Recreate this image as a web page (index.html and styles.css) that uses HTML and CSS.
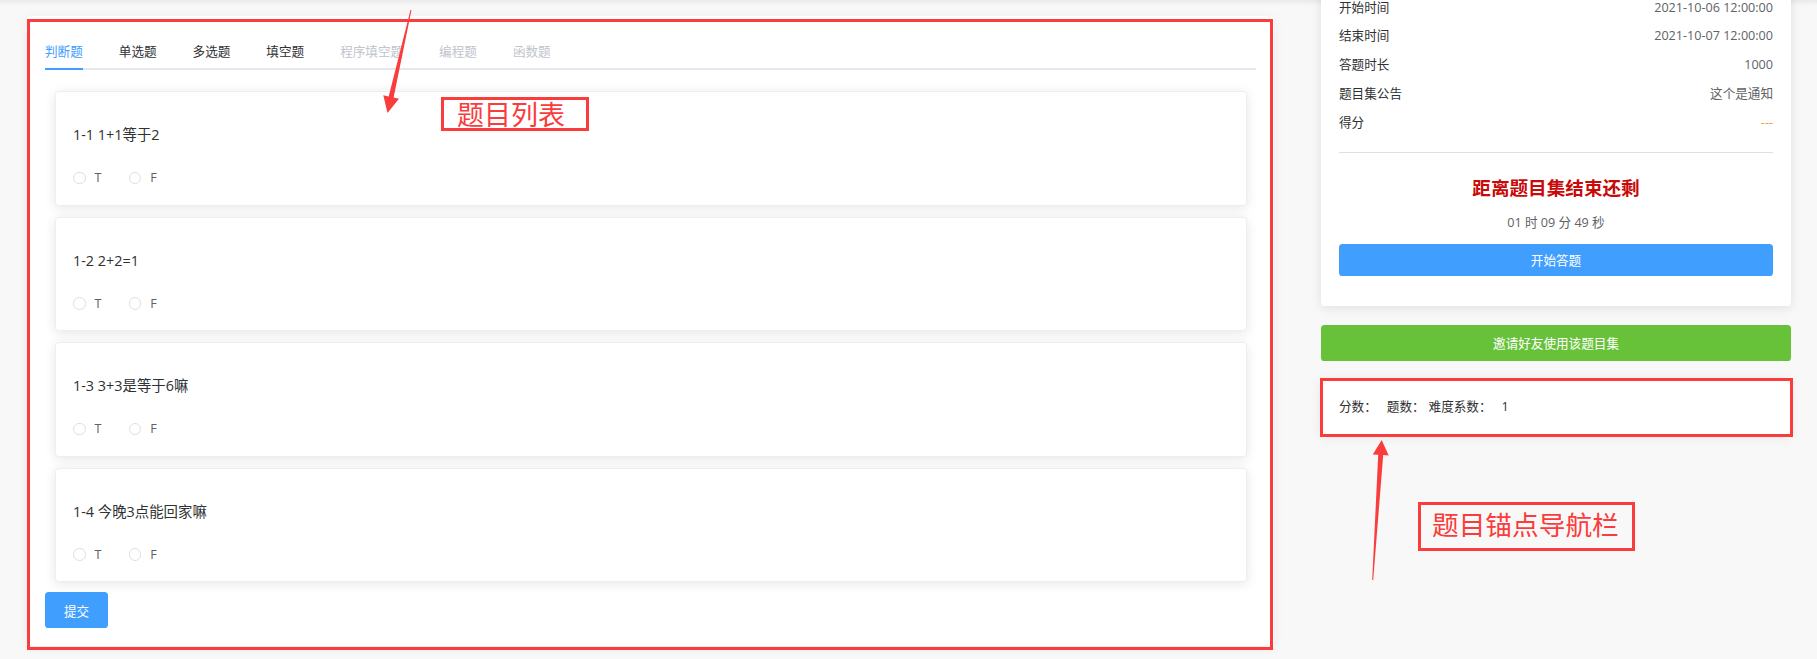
FILE: index.html
```html
<!DOCTYPE html>
<html lang="zh-CN">
<head>
<meta charset="utf-8">
<title>题目集</title>
<link rel="stylesheet" href="styles.css">
</head>
<body>
<div class="page">
  <main class="layout">
    <section class="paper">
      <nav class="tabs">
        <span class="tab active">判断题</span>
        <span class="tab">单选题</span>
        <span class="tab">多选题</span>
        <span class="tab">填空题</span>
        <span class="tab disabled">程序填空题</span>
        <span class="tab disabled">编程题</span>
        <span class="tab disabled">函数题</span>
      </nav>
      <div class="questions">
        <article class="q-card">
          <p class="q-title">1-1 1+1等于2</p>
          <div class="radios">
            <label class="radio"><span class="radio-dot"></span>T</label>
            <label class="radio"><span class="radio-dot"></span>F</label>
          </div>
        </article>
        <article class="q-card">
          <p class="q-title">1-2 2+2=1</p>
          <div class="radios">
            <label class="radio"><span class="radio-dot"></span>T</label>
            <label class="radio"><span class="radio-dot"></span>F</label>
          </div>
        </article>
        <article class="q-card">
          <p class="q-title">1-3 3+3是等于6嘛</p>
          <div class="radios">
            <label class="radio"><span class="radio-dot"></span>T</label>
            <label class="radio"><span class="radio-dot"></span>F</label>
          </div>
        </article>
        <article class="q-card">
          <p class="q-title">1-4 今晚3点能回家嘛</p>
          <div class="radios">
            <label class="radio"><span class="radio-dot"></span>T</label>
            <label class="radio"><span class="radio-dot"></span>F</label>
          </div>
        </article>
      </div>
      <button class="btn btn-submit">提交</button>
    </section>

    <aside class="side">
      <div class="info-card">
        <dl class="info-rows">
          <div class="info-row"><dt>开始时间</dt><dd>2021-10-06 12:00:00</dd></div>
          <div class="info-row"><dt>结束时间</dt><dd>2021-10-07 12:00:00</dd></div>
          <div class="info-row"><dt>答题时长</dt><dd>1000</dd></div>
          <div class="info-row"><dt>题目集公告</dt><dd>这个是通知</dd></div>
          <div class="info-row"><dt>得分</dt><dd class="score">---</dd></div>
        </dl>
        <div class="divider"></div>
        <h3 class="countdown-title">距离题目集结束还剩</h3>
        <p class="countdown">01 时 09 分 49 秒</p>
        <button class="btn btn-start">开始答题</button>
      </div>
      <button class="btn btn-invite">邀请好友使用该题目集</button>
      <div class="anchor-card">
        <span class="anchor-item first">分数：</span><span class="anchor-item">题数：</span><span class="anchor-item">难度系数：</span><span class="anchor-value">1</span>
      </div>
    </aside>
  </main>

  <div class="mark mark-list"></div>
  <div class="mark mark-nav"></div>
  <div class="tag tag-list">题目列表</div>
  <div class="tag tag-nav">题目锚点导航栏</div>
  <svg class="arrows" width="1817" height="659" viewBox="0 0 1817 659">
    <polygon points="410.5,9.9 388.7,96.4 383.3,95.2 387.5,113 399,98.8 393.6,97.6 411.5,10.1"/>
    <polygon points="1372.2,580 1378.2,454.8 1372.8,454.5 1381.7,440 1388.7,455.5 1383.2,455.1 1373.2,580"/>
  </svg>
</div>
</body>
</html>
```

FILE: styles.css
```css
* {
  box-sizing: border-box;
  margin: 0;
  padding: 0;
}

body {
  font-family: "Open Sans", "Noto Sans CJK SC", sans-serif;
  font-size: 12.6px;
  color: #303133;
  background: #f8f8f8 linear-gradient(#e9e9e9, #f8f8f8 6px) no-repeat;
  overflow: hidden;
}

.page {
  position: relative;
  width: 1817px;
  height: 659px;
  overflow: hidden;
}

.layout {
  display: flex;
  align-items: flex-start;
  gap: 47px;
  padding: 16px 26px 0 27px;
}

/* ---------- left: question paper ---------- */
.paper {
  flex: 0 0 1247px;
  background: #fff;
  padding: 18px;
  border-radius: 3.6px;
  box-shadow: 0 2px 12px rgba(0, 0, 0, 0.06);
}

.tabs {
  display: flex;
  height: 36px;
  box-shadow: inset 0 -2px 0 #e4e7ed;
}

.tab {
  position: relative;
  padding: 0 18px;
  height: 36px;
  line-height: 36px;
  color: #303133;
  white-space: nowrap;
}

.tab:first-child {
  padding-left: 0;
}

.tab.active {
  color: #409eff;
}

.tab.active::after {
  content: "";
  position: absolute;
  left: 0;
  right: 18px;
  bottom: 0;
  height: 2px;
  background: #409eff;
}

.tab.disabled {
  color: #c0c4cc;
}

.questions {
  display: flex;
  flex-direction: column;
  gap: 11px;
  padding: 21px 9px 0 10px;
}

.q-card {
  height: 114.5px;
  padding: 17px 17px 16.5px;
  border: 1px solid #ebeef5;
  border-radius: 3.6px;
  background: #fff;
  box-shadow: 0 2px 12px rgba(0, 0, 0, 0.1);
}

.q-title {
  margin-top: 16px;
  font-size: 14.4px;
  line-height: 20px;
  color: #303133;
}

.radios {
  display: flex;
  align-items: center;
  height: 20px;
  margin-top: 23px;
}

.radio {
  display: flex;
  align-items: center;
  margin-right: 27px;
  line-height: 20px;
  color: #606266;
}

.radio-dot {
  width: 12.6px;
  height: 12.6px;
  margin-right: 9px;
  border: 1px solid #dcdfe6;
  border-radius: 50%;
  background: #fff;
}

.btn {
  display: block;
  border: none;
  border-radius: 3.6px;
  font: inherit;
  color: #fff;
  text-align: center;
}

.btn-submit {
  width: 63px;
  height: 36px;
  margin-top: 10px;
  background: #409eff;
}

/* ---------- right: side panel ---------- */
.side {
  flex: 0 0 470px;
  margin-top: -40.4px;
  display: flex;
  flex-direction: column;
}

.info-card {
  background: #fff;
  padding: 18px 18px 29.7px;
  border-radius: 3.6px;
  box-shadow: 0 2px 12px rgba(0, 0, 0, 0.1);
}

.info-row {
  display: flex;
  justify-content: space-between;
  line-height: 28.8px;
}

.info-row dt {
  color: #303133;
}

.info-row dd {
  color: #606266;
}

.info-row dd.score {
  color: #e6a23c;
}

.divider {
  height: 1px;
  margin-top: 14.4px;
  background: #dcdfe6;
}

.countdown-title {
  margin-top: 20px;
  font-family: "Noto Sans CJK SC", sans-serif;
  font-size: 18.6px;
  font-weight: 700;
  line-height: 28px;
  text-align: center;
  color: #c80a0a;
}

.countdown {
  margin-top: 11.7px;
  line-height: 20px;
  text-align: center;
  color: #606266;
}

.btn-start {
  width: 100%;
  height: 32px;
  margin-top: 11.3px;
  background: #409eff;
}

.btn-invite {
  width: 100%;
  height: 36px;
  margin-top: 19.3px;
  background: #67c23a;
}

.anchor-card {
  margin-top: 18px;
  padding: 18px;
  line-height: 20px;
  background: #fff;
  color: #303133;
  box-shadow: 0 2px 12px rgba(0, 0, 0, 0.08);
}

.anchor-item {
  margin-right: 4px;
}

.anchor-item.first {
  margin-right: 10px;
}

.anchor-value {
  margin-left: 6px;
}

/* ---------- annotations drawn over the screenshot ---------- */
.mark {
  position: absolute;
  border: 3px solid #fa3c3c;
}

.mark-list {
  left: 27px;
  top: 19px;
  width: 1246px;
  height: 631px;
}

.mark-nav {
  left: 1320px;
  top: 378px;
  width: 473px;
  height: 59px;
}

.tag {
  position: absolute;
  border: 3px solid #fa3c3c;
  color: #fa3c3c;
  font-family: "Noto Sans CJK SC", sans-serif;
  font-weight: 400;
  white-space: nowrap;
}

.tag-list {
  left: 441px;
  top: 97px;
  width: 148px;
  height: 34px;
  padding-left: 13px;
  font-size: 27px;
  line-height: 28px;
}

.tag-nav {
  left: 1418px;
  top: 502px;
  width: 217px;
  height: 49px;
  padding-left: 11px;
  font-size: 26.7px;
  line-height: 38px;
}

.arrows {
  position: absolute;
  left: 0;
  top: 0;
  pointer-events: none;
}

.arrows polygon {
  fill: #fa3c3c;
}
```
